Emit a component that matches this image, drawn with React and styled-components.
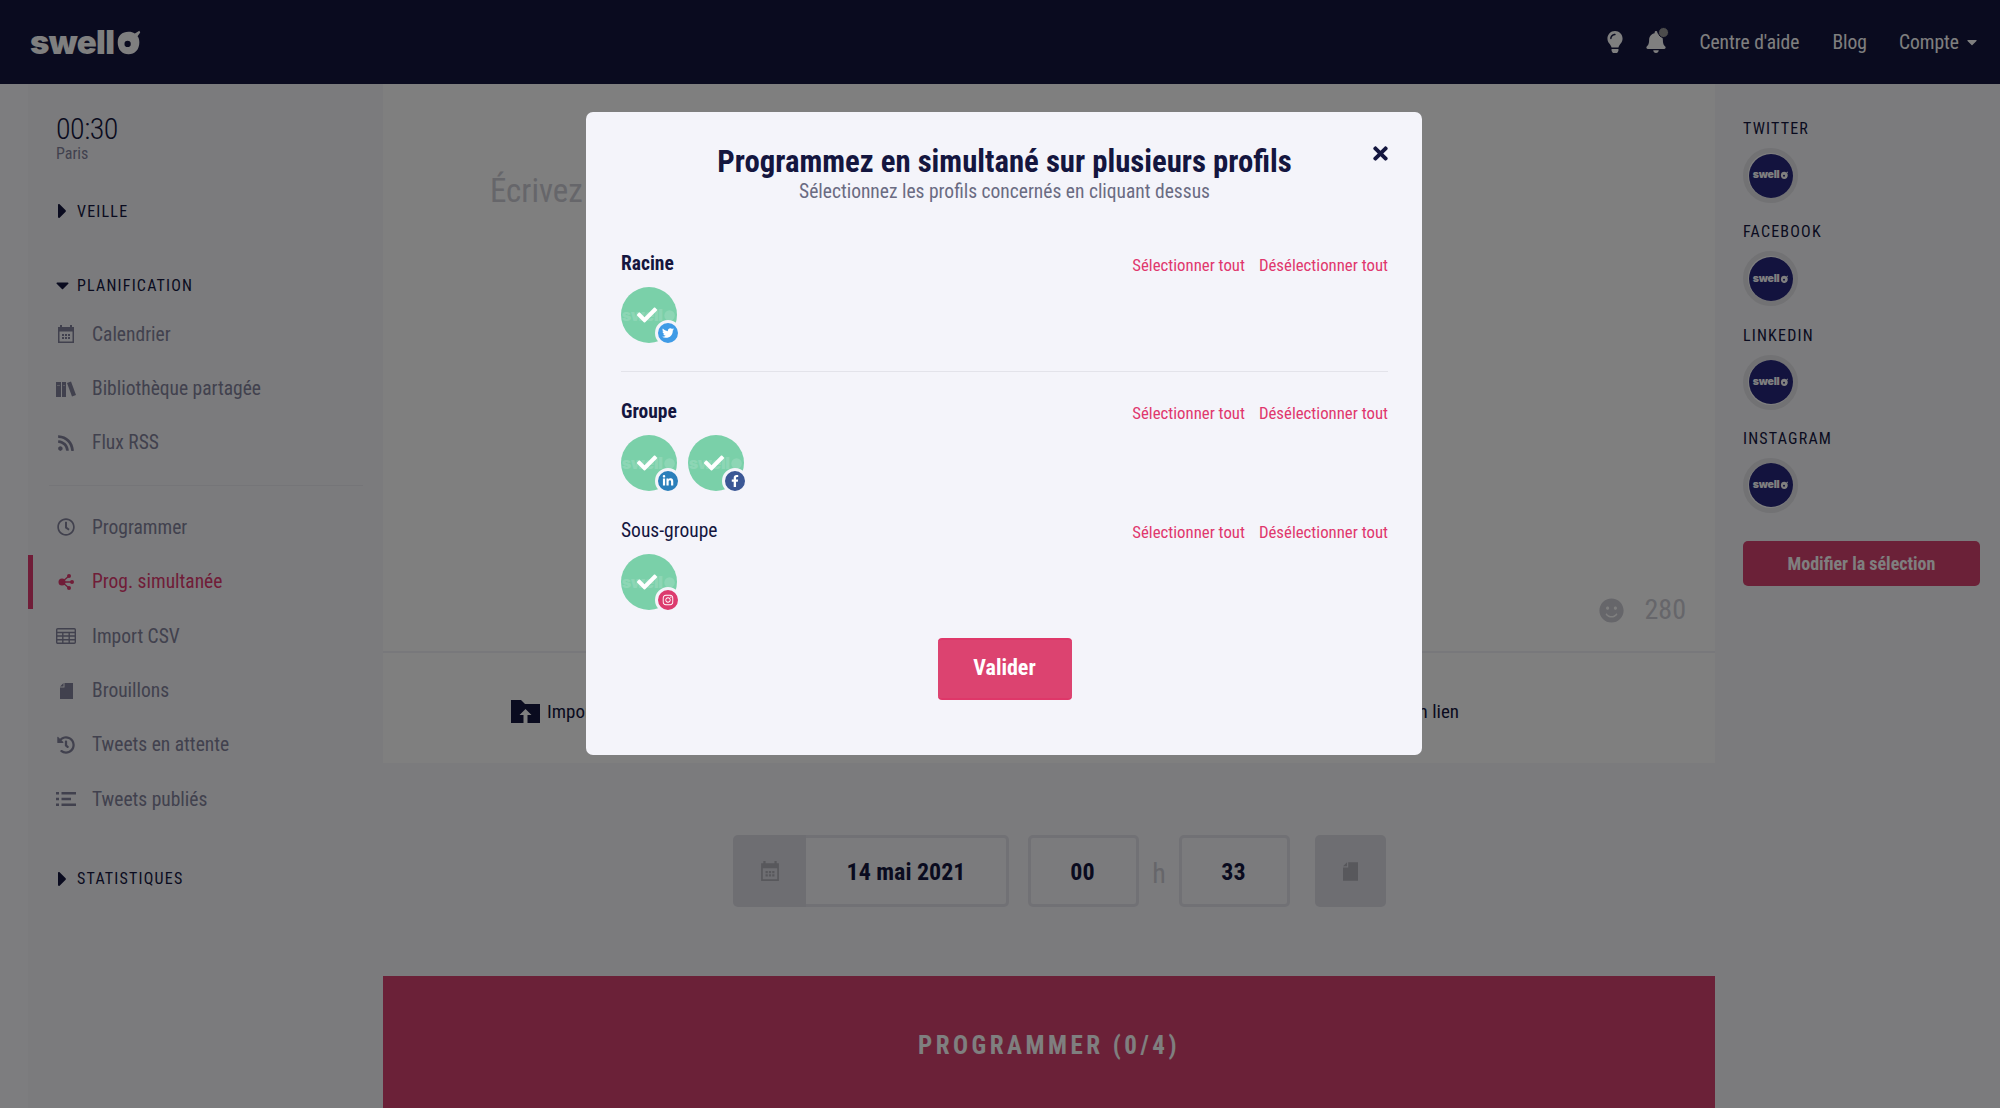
import React from 'react';
import styled, { createGlobalStyle } from 'styled-components';
import {
  FaBell, FaCaretDown, FaCaretRight, FaCheck, FaFacebookF, FaHistory, FaInstagram,
  FaLightbulb, FaLinkedinIn, FaRegClock, FaRss, FaSmile, FaTimes, FaTwitter,
} from 'react-icons/fa';

const GlobalStyle = createGlobalStyle`
  html, body { margin: 0; padding: 0; }
  body {
    background: #f6f6fa;
    font-family: "Roboto Condensed", Roboto, sans-serif;
    font-stretch: 75%;
    color: #14163f;
    overflow: hidden;
  }
  * { box-sizing: border-box; }
`;

const Page = styled.div`
  height: 1108px;
  display: flex;
  flex-direction: column;
  overflow: hidden;
  background: #f6f6fa;
`;

const Header = styled.header`
  height: 84px;
  flex: none;
  background: #14163f;
  display: flex;
  align-items: center;
  padding: 0 20px 0 30px;
  color: #fff;
`;

const LogoWrap = styled.div`
  display: flex;
  align-items: center;
  font-family: Inter, sans-serif;
  font-stretch: 100%;
  font-weight: 900;
  font-size: ${props => props.size}px;
  line-height: 1;
  letter-spacing: -0.02em;
  color: ${props => props.color || '#fff'};
  opacity: ${props => props.faded ? 0.14 : 1};
`;

const LogoO = styled.svg`
  width: 0.82em;
  height: 0.82em;
  margin-left: 0.02em;
  margin-top: 0.04em;
`;

const HeaderRight = styled.nav`
  margin-left: auto;
  display: flex;
  align-items: center;
  font-size: 19.5px;
`;

const HeaderIcon = styled.span`
  position: relative;
  display: flex;
  width: 22px;
  justify-content: center;
  font-size: ${props => props.size}px;
  margin-right: ${props => props.gap}px;
`;

const BellDot = styled.i`
  position: absolute;
  top: -4px;
  right: -2px;
  width: 11px;
  height: 11px;
  border-radius: 50%;
  background: #999;
  border: 1px solid #14163f;
`;

const HeaderLink = styled.a`
  margin-left: ${props => props.gap}px;
  display: flex;
  align-items: center;
  color: #fff;
`;

const Body = styled.div`
  flex: 1;
  display: flex;
  min-height: 0;
`;

const Strip = styled.div`
  width: 28px;
  flex: none;
  background: #fafaff;
`;

const Sidebar = styled.aside`
  width: 355px;
  flex: none;
  padding-top: 29px;
`;

const Clock = styled.div`
  margin-left: 28px;
  font-family: Roboto, sans-serif;
  font-size: 30px;
  font-weight: 300;
  line-height: 32px;
  letter-spacing: -0.5px;
  font-stretch: 85%;
`;

const City = styled.div`
  margin-left: 28px;
  font-size: 16px;
  line-height: 18px;
  color: #83839c;
`;

const SectionTitle = styled.div`
  height: 20px;
  margin: ${props => props.top}px 0 0 28px;
  display: flex;
  align-items: center;
  font-size: 16px;
  letter-spacing: 1.2px;
  font-weight: 400;
  svg { width: 13px; height: 24px; margin-right: 8px; flex: none; }
`;

const NavList = styled.div`
  margin-top: ${props => props.top}px;
`;

const NavItem = styled.div`
  height: 54.4px;
  padding-left: 28px;
  display: flex;
  align-items: center;
  font-size: 19.5px;
  color: ${props => props.active ? '#e13a70' : '#83839c'};
  box-shadow: ${props => props.active ? 'inset 5px 0 0 #e13a70' : 'none'};
`;

const NavIcon = styled.span`
  width: 20px;
  height: 20px;
  margin-right: 16px;
  display: flex;
  align-items: center;
  justify-content: center;
  font-size: 18px;
  flex: none;
  svg { display: block; }
`;

const SideDivider = styled.hr`
  border: 0;
  height: 1px;
  margin: 15px 20px 14px 21px;
  background: #ebebf1;
`;

const Main = styled.main`
  width: 1332px;
  flex: none;
  display: flex;
  flex-direction: column;
`;

const EditorBox = styled.section`
  height: 569px;
  flex: none;
  background: #fff;
  display: flex;
  flex-direction: column;
  justify-content: space-between;
  padding: 84px 29px 23px 107px;
  border-bottom: 2px solid #f1f1f6;
`;

const Placeholder = styled.div`
  font-size: 33px;
  line-height: 46px;
  color: #ccccd4;
  white-space: nowrap;
`;

const CounterRow = styled.div`
  display: flex;
  align-items: center;
  justify-content: flex-end;
  gap: 21px;
  font-size: 28px;
  line-height: 36px;
  color: #ccccd4;
  svg { font-size: 25px; }
`;

const ImportRow = styled.section`
  height: 110px;
  flex: none;
  background: #fff;
  display: flex;
  align-items: center;
  justify-content: space-between;
  padding: 6px 256px 0 128px;
  font-size: 19px;
`;

const ImportItem = styled.div`
  display: flex;
  align-items: center;
  gap: 7px;
`;

const DateRow = styled.section`
  margin: 72px 0 0 350px;
  height: 72px;
  flex: none;
  display: flex;
  align-items: stretch;
`;

const DateGroup = styled.div`
  width: 276px;
  display: flex;
  margin-right: 19px;
`;

const AddOn = styled.div`
  width: 73px;
  background: #dcdce4;
  color: #b0b0b8;
  border-radius: 5px 0 0 5px;
  display: flex;
  align-items: center;
  justify-content: center;
`;

const TimeField = styled.div`
  width: ${props => props.width};
  flex: ${props => props.grow ? 1 : 'none'};
  border: 3px solid #e2e2ea;
  border-left-width: ${props => props.grow ? 0 : 3}px;
  border-radius: ${props => props.grow ? '0 5px 5px 0' : '5px'};
  display: flex;
  align-items: center;
  justify-content: center;
  font-size: 24px;
  font-weight: 700;
  padding-top: 2px;
  padding-right: ${props => props.grow ? 0 : 2}px;
`;

const HourMark = styled.div`
  width: 40px;
  display: flex;
  align-items: center;
  justify-content: center;
  font-size: 28px;
  color: #ccccd4;
  padding-top: 4px;
`;

const DraftButton = styled.div`
  width: 71px;
  margin-left: 25px;
  background: #dcdce4;
  color: #b0b0b8;
  border-radius: 5px;
  display: flex;
  align-items: center;
  justify-content: center;
`;

const SubmitBar = styled.div`
  margin-top: 69px;
  flex: 1;
  background: #d64270;
  color: #fff;
  display: flex;
  justify-content: center;
  padding-top: 54px;
  font-size: 25px;
  font-weight: 700;
  letter-spacing: 3.5px;
  line-height: 32px;
`;

const RightPanel = styled.aside`
  flex: 1;
  padding: 35px 20px 0 28px;
`;

const NetworkTitle = styled.div`
  font-size: 16px;
  line-height: 20px;
  letter-spacing: 1.2px;
`;

const ProfileRing = styled.div`
  width: 55px;
  height: 55px;
  margin: 9px 0 19.3px;
  border-radius: 50%;
  border: 5px solid #e4e4e8;
  background: #fff;
  display: flex;
  align-items: center;
  justify-content: center;
`;

const ProfileDisc = styled.div`
  width: 44px;
  height: 44px;
  flex: none;
  border-radius: 50%;
  background: #26267c;
  display: flex;
  align-items: center;
  justify-content: center;
`;

const EditButton = styled.div`
  height: 45px;
  margin-top: 28px;
  background: #d64270;
  border-radius: 5px;
  color: #fff;
  display: flex;
  align-items: center;
  justify-content: center;
  font-size: 18px;
  font-weight: 700;
`;

const Overlay = styled.div`
  position: fixed;
  inset: 0;
  background: rgba(0, 0, 0, 0.5);
  display: flex;
  justify-content: center;
  align-items: flex-start;
  padding: 112px 0 0 8px;
`;

const Modal = styled.div`
  position: relative;
  width: 836px;
  height: 643px;
  background: #f4f4fa;
  border-radius: 7px;
  padding: 32px 34px 0 35px;
`;

const CloseButton = styled.div`
  position: absolute;
  top: 31px;
  right: 31px;
  font-size: 21px;
  line-height: 1;
  display: flex;
`;

const ModalTitle = styled.h2`
  margin: 0;
  text-align: center;
  font-size: 30.75px;
  line-height: 36px;
  font-weight: 700;
`;

const ModalSub = styled.p`
  margin: 0;
  text-align: center;
  font-size: 19.5px;
  line-height: 24px;
  color: #6a6b82;
`;

const GroupHead = styled.div`
  height: 24px;
  margin-top: ${props => props.top}px;
  display: flex;
  align-items: center;
  justify-content: space-between;
`;

const GroupName = styled.div`
  font-size: 19.5px;
  font-weight: ${props => props.bold ? 700 : 400};
`;

const GroupLinks = styled.div`
  display: flex;
  gap: 14px;
  font-size: 16.8px;
  color: #e0376d;
  padding-top: 3px;
`;

const AvatarRow = styled.div`
  margin-top: 12px;
  display: flex;
  gap: 11px;
`;

const Avatar = styled.div`
  position: relative;
  width: 56px;
  height: 56px;
  border-radius: 50%;
  background: #7ad0a9;
  display: flex;
  align-items: center;
  justify-content: center;
`;

const Check = styled.span`
  position: absolute;
  inset: 0;
  display: flex;
  align-items: center;
  justify-content: center;
  padding-right: 4px;
  color: #fff;
  font-size: 20px;
`;

const Badge = styled.span`
  position: absolute;
  right: -4px;
  bottom: -3px;
  width: 26px;
  height: 26px;
  border-radius: 50%;
  border: 3px solid #f4f4fa;
  background: ${props => props.color};
  color: #fff;
  font-size: 12px;
  display: flex;
  align-items: center;
  justify-content: center;
`;

const ModalDivider = styled.hr`
  border: 0;
  height: 1px;
  margin: 28px 0 0;
  background: #e3e3ea;
`;

const ConfirmRow = styled.div`
  margin-top: 28px;
  display: flex;
  justify-content: center;
`;

const ConfirmButton = styled.button`
  width: 134px;
  height: 62px;
  border: 0;
  border-top: 2px solid #df3769;
  border-bottom: 2px solid #df3769;
  border-radius: 4px;
  background: #dc4370;
  color: #fff;
  padding: 0 0 3px;
  font-family: inherit;
  font-stretch: inherit;
  font-size: 22px;
  font-weight: 700;
`;

const Logo = ({ size, color }) => (
  <LogoWrap size={size} color={color}>
    swell
    <LogoO viewBox="0 0 30 30">
      <path fill="currentColor" fillRule="evenodd" d="M15 3c3 0 5 .6 7 2l5-3 1 2-3 4c1.500 2 2 4 2 7 0 8-5 13-12 13S3 23 3 15 8 3 15 3zm-1 10a3.500 3.500 0 1 0 0 7 3.500 3.500 0 0 0 0-7z" />
    </LogoO>
  </LogoWrap>
);

const CalendarIcon = ({ size = 18 }) => (
  <svg width={size} height={size} viewBox="0 0 18 18" fill="currentColor">
    <path fillRule="evenodd" d="M1 2h2V0h2v2h8V0h2v2h2v16H1V2zm1.500 4.500v10h13v-10z" />
    <path d="M5 9h2v2H5zM8 9h2v2H8zM11 9h2v2h-2zM5 12h2v2H5zM8 12h2v2H8zM11 12h2v2h-2z" />
  </svg>
);

const BooksIcon = () => (
  <svg width="20" height="16" viewBox="0 0 20 16" fill="currentColor">
    <path d="M0 1h5v15H0zM6 1h4v15H6zM11 2l4-1.500L20 14l-4 1.500z" />
    <path fill="#fff" opacity=".45" d="M1 4h3v1H1zM7 4h2v1H7z" />
  </svg>
);

const ShareIcon = () => (
  <svg width="16" height="18" viewBox="0 0 16 18" fill="currentColor">
    <circle cx="4" cy="9" r="3.500" />
    <circle cx="11" cy="3" r="2" />
    <circle cx="14" cy="9" r="2" />
    <circle cx="11" cy="15" r="2" />
    <path d="M4 9l7-6M4 9h10M4 9l7 6" stroke="currentColor" strokeWidth="1.300" />
  </svg>
);

const TableIcon = () => (
  <svg width="20" height="16" viewBox="0 0 20 16" fill="none" stroke="currentColor" strokeWidth="1.400">
    <rect x=".7" y=".7" width="18.600" height="14.600" rx="1" />
    <path d="M.7 4.500h18.600M.7 8h18.600M.7 11.700h18.600M6.800 4.500v10.800M13.200 4.500v10.800" />
  </svg>
);

const DocIcon = ({ w = 13, h = 16 }) => (
  <svg width={w} height={h} viewBox="0 0 13 16" fill="currentColor">
    <path d="M4.500 0H13v16H0V4.500h4.500zM0 3.500L3.500 0v3.500z" />
  </svg>
);

const ListIcon = () => (
  <svg width="20" height="14" viewBox="0 0 20 14" fill="currentColor">
    <path d="M0 0h3v2.400H0zM5.500 0H20v2.400H5.500zM0 5.800h3v2.400H0zM5.500 5.800H15v2.400H5.500zM0 11.600h3V14H0zM5.500 11.600H20V14H5.500z" />
  </svg>
);

const FolderIcon = () => (
  <svg width="29" height="23" viewBox="0 0 29 23" fill="#14163f">
    <path d="M0 0h10l4 4h15v19H0z" />
    <path fill="#fff" d="M14.500 9l6 6h-4v8h-4v-8h-4z" />
  </svg>
);

const navTop = [
  { label: 'Calendrier', icon: <CalendarIcon /> },
  { label: 'Bibliothèque partagée', icon: <BooksIcon /> },
  { label: 'Flux RSS', icon: <FaRss /> },
];

const navBottom = [
  { label: 'Programmer', icon: <FaRegClock /> },
  { label: 'Prog. simultanée', icon: <ShareIcon />, active: true },
  { label: 'Import CSV', icon: <TableIcon /> },
  { label: 'Brouillons', icon: <DocIcon /> },
  { label: 'Tweets en attente', icon: <FaHistory /> },
  { label: 'Tweets publiés', icon: <ListIcon /> },
];

const networks = ['TWITTER', 'FACEBOOK', 'LINKEDIN', 'INSTAGRAM'];

const NavBlock = ({ items, top }) => (
  <NavList top={top}>
    {items.map(item => (
      <NavItem key={item.label} active={item.active}>
        <NavIcon>{item.icon}</NavIcon>
        {item.label}
      </NavItem>
    ))}
  </NavList>
);

const CheckedAvatar = ({ color, icon }) => (
  <Avatar>
    <LogoWrap size={16} faded>
      swell
      <LogoO viewBox="0 0 30 30">
        <circle cx="15" cy="15" r="12" fill="currentColor" />
      </LogoO>
    </LogoWrap>
    <Check><FaCheck /></Check>
    <Badge color={color}>{icon}</Badge>
  </Avatar>
);

const GroupHeader = ({ name, bold, top }) => (
  <GroupHead top={top}>
    <GroupName bold={bold}>{name}</GroupName>
    <GroupLinks>
      <span>Sélectionner tout</span>
      <span>Désélectionner tout</span>
    </GroupLinks>
  </GroupHead>
);

export default function App() {
  return (
    <Page>
      <GlobalStyle />
      <Header>
        <Logo size={33} />
        <HeaderRight>
          <HeaderIcon size={22} gap={19}><FaLightbulb /></HeaderIcon>
          <HeaderIcon size={22} gap={0}><FaBell /><BellDot /></HeaderIcon>
          <HeaderLink gap={32}>Centre d'aide</HeaderLink>
          <HeaderLink gap={33}>Blog</HeaderLink>
          <HeaderLink gap={32}>Compte<FaCaretDown style={{ marginLeft: 5, fontSize: 16 }} /></HeaderLink>
        </HeaderRight>
      </Header>
      <Body>
        <Strip />
        <Sidebar>
          <Clock>00:30</Clock>
          <City>Paris</City>
          <SectionTitle top={38}><FaCaretRight />VEILLE</SectionTitle>
          <SectionTitle top={54}><FaCaretDown />PLANIFICATION</SectionTitle>
          <NavBlock items={navTop} top={12} />
          <SideDivider />
          <NavBlock items={navBottom} top={0} />
          <SectionTitle top={42}><FaCaretRight />STATISTIQUES</SectionTitle>
        </Sidebar>
        <Main>
          <EditorBox>
            <Placeholder>Écrivez votre message ici</Placeholder>
            <CounterRow><FaSmile />280</CounterRow>
          </EditorBox>
          <ImportRow>
            <ImportItem><FolderIcon />Importer</ImportItem>
            <ImportItem>Ajouter un lien</ImportItem>
          </ImportRow>
          <DateRow>
            <DateGroup>
              <AddOn><CalendarIcon size={20} /></AddOn>
              <TimeField grow>14 mai 2021</TimeField>
            </DateGroup>
            <TimeField width="111px">00</TimeField>
            <HourMark>h</HourMark>
            <TimeField width="111px">33</TimeField>
            <DraftButton><DocIcon w={15} h={19} /></DraftButton>
          </DateRow>
          <SubmitBar>PROGRAMMER (0/4)</SubmitBar>
        </Main>
        <RightPanel>
          {networks.map(name => (
            <div key={name}>
              <NetworkTitle>{name}</NetworkTitle>
              <ProfileRing>
                <ProfileDisc><Logo size={10.5} /></ProfileDisc>
              </ProfileRing>
            </div>
          ))}
          <EditButton>Modifier la sélection</EditButton>
        </RightPanel>
      </Body>
      <Overlay>
        <Modal>
          <CloseButton><FaTimes /></CloseButton>
          <ModalTitle>Programmez en simultané sur plusieurs profils</ModalTitle>
          <ModalSub>Sélectionnez les profils concernés en cliquant dessus</ModalSub>
          <GroupHeader name="Racine" bold top={47} />
          <AvatarRow>
            <CheckedAvatar color="#3f9be6" icon={<FaTwitter />} />
          </AvatarRow>
          <ModalDivider />
          <GroupHeader name="Groupe" bold top={27} />
          <AvatarRow>
            <CheckedAvatar color="#2b7fba" icon={<FaLinkedinIn />} />
            <CheckedAvatar color="#3b5795" icon={<FaFacebookF />} />
          </AvatarRow>
          <GroupHeader name="Sous-groupe" top={27} />
          <AvatarRow>
            <CheckedAvatar color="#dc3b6e" icon={<FaInstagram />} />
          </AvatarRow>
          <ConfirmRow><ConfirmButton>Valider</ConfirmButton></ConfirmRow>
        </Modal>
      </Overlay>
    </Page>
  );
}
